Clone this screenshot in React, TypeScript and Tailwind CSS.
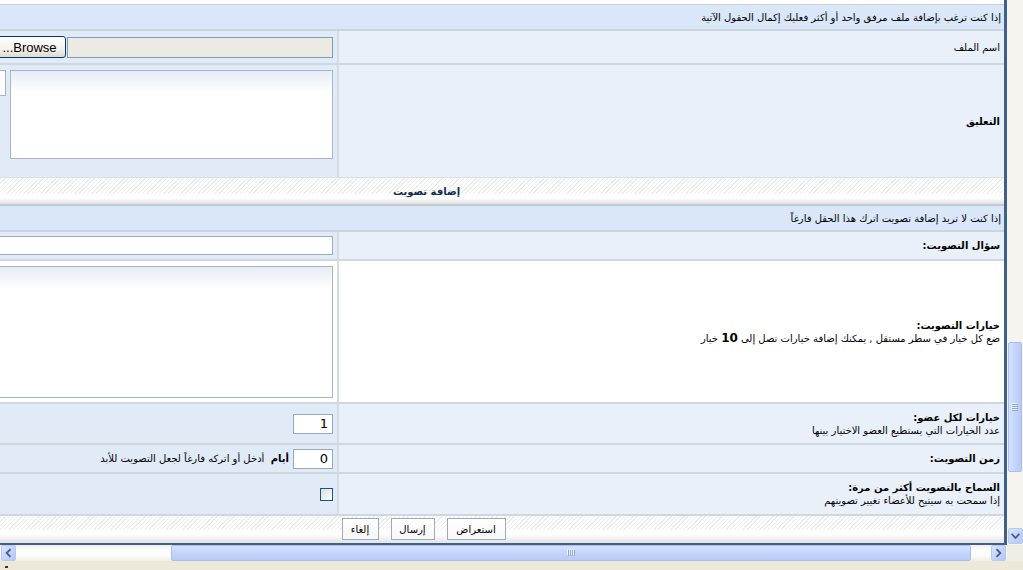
import React from "react";

function Header({ text }: { text: string }) {
  return (
    <div
      dir="rtl"
      className="h-[26px] bg-[#d9e7f8] border-b-2 border-[#cbd5df] flex items-center pr-[3px]"
    >
      {text}
    </div>
  );
}

function Row({
  h,
  white = false,
  border = true,
  alignTop = false,
  left,
  right,
}: {
  h: string;
  white?: boolean;
  border?: boolean;
  alignTop?: boolean;
  left: React.ReactNode;
  right: React.ReactNode;
}) {
  return (
    <div className={`flex ${h} ${border ? "border-b-2 border-[#cfd7df]" : ""}`}>
      <div
        className={`w-[494px] shrink-0 border-r-2 border-[#d3dbe4] flex justify-end pr-[4px] ${
          alignTop ? "items-start pt-[5px]" : "items-center"
        } ${white ? "bg-white" : "bg-[#e1ebf8]"}`}
      >
        {left}
      </div>
      <div
        dir="rtl"
        className={`flex-1 flex items-center pr-[4px] ${white ? "bg-white" : "bg-[#e9f0f9]"}`}
      >
        {right}
      </div>
    </div>
  );
}

function Chevron({ dir }: { dir: "down" | "left" | "right" }) {
  const d =
    dir === "down"
      ? "M3.5 5.5 L7 9 L10.5 5.5"
      : dir === "left"
      ? "M8.5 3.5 L5 7 L8.5 10.5"
      : "M5.5 3.5 L9 7 L5.5 10.5";
  return (
    <svg width="14" height="14" viewBox="0 0 14 14">
      <path d={d} fill="none" stroke="#4d6185" strokeWidth="2" strokeLinecap="square" />
    </svg>
  );
}

function ArrowBtn({ dir }: { dir: "down" | "left" | "right" }) {
  return (
    <div className="w-[15px] h-[16px] shrink-0 rounded-[2px] border border-[#b7c9f3] bg-[image:linear-gradient(135deg,#d9e4fe,#c1d2fc_60%,#b3c8f6)] flex items-center justify-center">
      <Chevron dir={dir} />
    </div>
  );
}

function GripV() {
  return (
    <svg width="8" height="8" viewBox="0 0 8 8">
      {[0, 2, 4, 6].map((y) => (
        <g key={y}>
          <rect x="0" y={y} width="6" height="1" fill="#eef3fe" />
          <rect x="1" y={y + 1} width="6" height="1" fill="#8ca5e0" />
        </g>
      ))}
    </svg>
  );
}

function GripH() {
  return (
    <svg width="8" height="8" viewBox="0 0 8 8">
      {[0, 2, 4, 6].map((x) => (
        <g key={x}>
          <rect x={x} y="0" width="1" height="6" fill="#eef3fe" />
          <rect x={x + 1} y="1" width="1" height="6" fill="#8ca5e0" />
        </g>
      ))}
    </svg>
  );
}

function VScroll() {
  return (
    <div className="w-[16px] h-[545px] bg-[#f5f4ef] flex flex-col items-center">
      <div className="flex-1 w-full flex flex-col items-center">
        <div className="mt-[342px] w-[14px] h-[130px] rounded-[2px] border border-[#a9bff0] bg-[image:linear-gradient(to_right,#d6e1fe,#c4d5fc_50%,#b8caf6)] flex items-center justify-center">
          <GripV />
        </div>
      </div>
      <ArrowBtn dir="down" />
      <div className="h-[1px]" />
    </div>
  );
}

function HScroll() {
  return (
    <div className="flex h-[16px] shrink-0">
      <div className="w-[1007px] flex items-stretch bg-[image:linear-gradient(to_bottom,#f1efe8,#fefefd_35%,#fbfaf7_70%,#efede6)]">
        <div className="w-[1px]" />
        <ArrowBtn dir="left" />
        <div className="w-[155px]" />
        <div className="w-[800px] rounded-[2px] border border-[#a9bff0] bg-[image:linear-gradient(to_bottom,#d6e1fe,#c4d5fc_50%,#b8caf6)] flex items-center justify-center">
          <GripH />
        </div>
        <div className="flex-1" />
        <ArrowBtn dir="right" />
        <div className="w-[1px]" />
      </div>
      <div className="w-[16px] bg-[#efede5]" />
    </div>
  );
}

const btn =
  "h-[22px] border border-[#9cabba] bg-[image:linear-gradient(to_bottom,#ffffff,#f7f7f7)] flex items-center justify-center";

export default function App() {
  return (
    <div className="w-[1023px] h-[570px] overflow-hidden bg-[#ece9d8] font-['DejaVu_Sans',sans-serif] text-[10px] leading-[13px] text-black flex flex-col">
      <div className="flex h-[545px] shrink-0">
        <div className="w-[1007px] h-[545px] overflow-hidden bg-white border-r-[3px] border-b-2 border-[#3f6088]">
          <div className="w-[1159px] ml-[-155px] flex flex-col">
            <div className="h-[5px] bg-white border-b border-[#c6ced6]" />
            <Header text="إذا كنت ترغب بإضافة ملف مرفق واحد أو أكثر فعليك إكمال الحقول الآتية" />
            <Row
              h="h-[34px]"
              left={
                <div className="flex items-center gap-[1px]">
                  <div className="w-[73px] h-[22px] rounded-[3px] border border-[#003c74] bg-[image:linear-gradient(to_bottom,#ffffff,#f3f2ec_60%,#dedbd0)] flex items-center justify-center font-['Liberation_Sans',sans-serif] text-[13px]">
                    ...Browse
                  </div>
                  <div className="w-[266px] h-[21px] bg-[#ebeae3] border border-[#7f9db9]" />
                </div>
              }
              right={<span>اسم الملف</span>}
            />
            <Row
              h="h-[112px]"
              border={false}
              alignTop
              left={
                <div className="flex items-start gap-[4px]">
                  <div className="w-[40px] h-[26px] bg-white border border-[#a6b4c2]" />
                  <div className="w-[323px] h-[89px] border border-[#a6b7c8] bg-[image:linear-gradient(to_bottom,#e6edf5,#ffffff_22px)]" />
                </div>
              }
              right={<b>التعليق</b>}
            />
            <div className="h-[29px] border-t border-[#dcdfe3] border-b-2 border-b-[#c2c8cf] bg-[image:linear-gradient(to_bottom,transparent_0px,transparent_15px,#ffffff_17px,#ffffff_20px,#e2e2e2_100%),repeating-linear-gradient(135deg,#ffffff_0px,#ffffff_2px,#ececec_2px,#ececec_3px)] flex items-center justify-center">
              <b dir="rtl" className="text-[#102d50] pl-[4px]">إضافة تصويت</b>
            </div>
            <Header text="إذا كنت لا تريد إضافة تصويت اترك هذا الحقل فارغاً" />
            <Row
              h="h-[29px]"
              left={<div className="w-[480px] h-[19px] bg-white border border-[#9fadbb]" />}
              right={<b>سؤال التصويت:</b>}
            />
            <Row
              h="h-[143px]"
              white
              alignTop
              left={<div className="w-[480px] h-[132px] border border-[#a6b7c8] bg-[image:linear-gradient(to_bottom,#e6edf5,#ffffff_22px)]" />}
              right={
                <div>
                  <b>خيارات التصويت:</b>
                  <br />
                  <span>
                    ضع كل خيار في سطر مستقل , يمكنك إضافة خيارات تصل إلى{" "}
                    <b className="text-[12px]">10</b> خيار
                  </span>
                </div>
              }
            />
            <Row
              h="h-[41px]"
              left={
                <div className="w-[40px] h-[20px] bg-white border border-[#98a8b8] flex items-center justify-end pr-[4px] text-[13px]">
                  1
                </div>
              }
              right={
                <div>
                  <b>خيارات لكل عضو:</b>
                  <br />
                  <span>عدد الخيارات التي يستطيع العضو الاختيار بينها</span>
                </div>
              }
            />
            <Row
              h="h-[29px]"
              left={
                <div className="flex items-center gap-[4px]">
                  <span dir="rtl">
                    <b>أيام</b>&nbsp; أدخل أو اتركه فارغاً لجعل التصويت للأبد
                  </span>
                  <div className="w-[40px] h-[20px] bg-white border border-[#98a8b8] flex items-center justify-end pr-[4px] text-[13px]">
                    0
                  </div>
                </div>
              }
              right={<b>زمن التصويت:</b>}
            />
            <Row
              h="h-[42px]"
              left={
                <div className="w-[13px] h-[13px] border border-[#1c5180] bg-[image:linear-gradient(135deg,#dcdcd6,#ffffff)]" />
              }
              right={
                <div>
                  <b>السماح بالتصويت أكثر من مرة:</b>
                  <br />
                  <span>إذا سمحت به سيتيح للأعضاء تغيير تصويتهم</span>
                </div>
              }
            />
            <div
              dir="rtl"
              className="h-[27px] bg-[image:linear-gradient(to_bottom,transparent_0px,transparent_13px,#ffffff_15px,#ffffff_18px,#e4e4e4_100%),repeating-linear-gradient(135deg,#ffffff_0px,#ffffff_2px,#ececec_2px,#ececec_3px)] flex items-start justify-center pt-[2px] gap-[12px] pr-[2px]"
            >
              <div className={`${btn} w-[59px]`}>استعراض</div>
              <div className={`${btn} w-[44px]`}>إرسال</div>
              <div className={`${btn} w-[37px]`}>إلغاء</div>
            </div>
          </div>
        </div>
        <VScroll />
      </div>
      <HScroll />
      <div className="h-[9px] shrink-0 bg-[#ece9d8]">
        <div className="ml-[5px] mt-[5px] w-[3px] h-[2px] bg-[#333]" />
      </div>
    </div>
  );
}
